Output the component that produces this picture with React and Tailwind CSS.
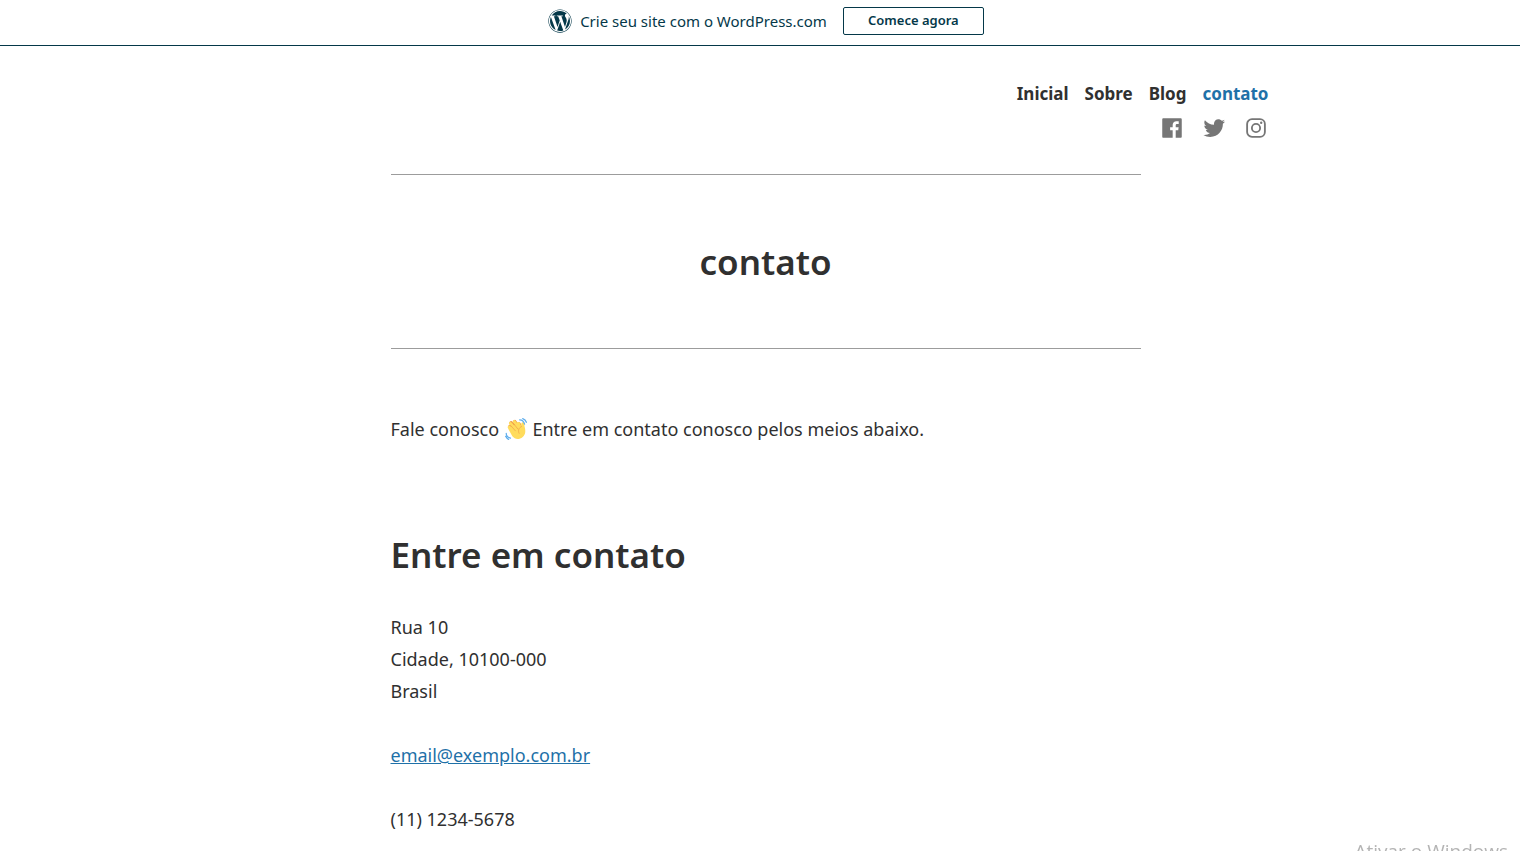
import React from 'react';
import { FaWordpress } from 'react-icons/fa';

const links = [
  { label: 'Inicial', href: '#inicial' },
  { label: 'Sobre', href: '#sobre' },
  { label: 'Blog', href: '#blog' },
  { label: 'contato', href: '#contato', active: true },
];

const socials = [
  {
    name: 'Facebook',
    path: 'M20.007,3H3.993C3.445,3,3,3.445,3,3.993v16.013c0,0.548,0.445,0.993,0.993,0.993h8.621v-6.971h-2.346v-2.717h2.346V9.31c0-2.325,1.42-3.591,3.494-3.591c0.993,0,1.847,0.074,2.096,0.107v2.43l-1.438,0.001c-1.128,0-1.346,0.536-1.346,1.323v1.734h2.69l-0.35,2.717h-2.34V21h4.587C20.555,21,21,20.555,21,20.007V3.993C21,3.445,20.555,3,20.007,3z',
  },
  {
    name: 'Twitter',
    path: 'M22.23,5.924c-0.736,0.326-1.527,0.547-2.357,0.646c0.847-0.508,1.498-1.312,1.804-2.27c-0.793,0.47-1.671,0.812-2.606,0.996C18.324,4.498,17.257,4,16.077,4c-2.266,0-4.103,1.837-4.103,4.103c0,0.322,0.036,0.635,0.106,0.935C8.67,8.867,5.647,7.234,3.623,4.751C3.27,5.357,3.067,6.062,3.067,6.814c0,1.424,0.724,2.679,1.825,3.415c-0.673-0.021-1.305-0.206-1.859-0.513c0,0.017,0,0.034,0,0.052c0,1.988,1.414,3.647,3.292,4.023c-0.344,0.094-0.707,0.144-1.081,0.144c-0.264,0-0.521-0.026-0.772-0.074c0.522,1.63,2.038,2.816,3.833,2.85c-1.404,1.1-3.174,1.756-5.096,1.756c-0.331,0-0.658-0.019-0.979-0.057c1.816,1.164,3.973,1.843,6.29,1.843c7.547,0,11.675-6.252,11.675-11.675c0-0.178-0.004-0.355-0.012-0.531C20.985,7.47,21.68,6.747,22.23,5.924z',
  },
];

function WavingHand() {
  return (
    <svg viewBox="0 0 36 36" role="img" aria-label="mão acenando" className="mx-px inline-block size-[22px] align-[-4px]">
      <g fill="none" stroke="#EF9645" strokeWidth="5.6" strokeLinecap="round">
        <path d="M8 14l10 11M10 8l12 14M16 6l10 14M23 10l6 12" />
      </g>
      <g fill="none" stroke="#FFDC5D" strokeWidth="5" strokeLinecap="round">
        <path d="M7 15l10 11M9 9l12 14M15 6l11 15M22 9l5 12" />
      </g>
      <path
        fill="#FFDC5D"
        d="M5 17L21 9l6 5c-1-5 0-7 2-7s3 3 3 7c2 7 2 13-3 17-6 5-13 4-17-1z"
      />
      <path fill="none" stroke="#EF9645" strokeWidth="1" strokeLinecap="round" d="M9 12l8 9M14 9l7 9M27 14c-5 2-6 7-4 11" />
      <g fill="none" stroke="#5DADEC" strokeWidth="2" strokeLinecap="round">
        <path d="M24 3c4 0 7 3 8 7M29 1c3 1 5 3 6 6M2 25c0 4 3 7 7 8M1 30c1 2 2 4 5 5" />
      </g>
    </svg>
  );
}

function Banner() {
  return (
    <div className="flex h-[46px] items-center justify-center border-b border-[#043849] pb-[3px] pl-3 text-[#043849]">
      <FaWordpress className="mr-2 size-6" />
      <span className="mr-4 text-[15px]">Crie seu site com o WordPress.com</span>
      <button className="h-7 w-[141px] rounded-xs border border-[#043849] text-[13px] font-semibold">
        Comece agora
      </button>
    </div>
  );
}

function Header() {
  return (
    <header className="mx-auto flex max-w-[1006px] flex-col items-end pt-8">
      <nav className="flex gap-4 text-[17px] leading-8 font-bold">
        {links.map((link) => (
          <a key={link.label} href={link.href} className={link.active ? 'text-[#1f71a8]' : 'text-[#303030]'}>
            {link.label}
          </a>
        ))}
      </nav>
      <div className="mt-[5px] flex gap-4 text-[#767676]">
        {socials.map((s) => (
          <a key={s.name} href={`#${s.name}`} aria-label={s.name}>
            <svg viewBox="0 0 24 24" fill="currentColor" className="size-[26px]">
              <path d={s.path} />
            </svg>
          </a>
        ))}
        <a href="#Instagram" aria-label="Instagram">
          <svg viewBox="0 0 24 24" className="size-[26px]" fill="none" stroke="currentColor">
            <rect x="3.8" y="3.8" width="16.4" height="16.4" rx="4.5" strokeWidth="1.7" />
            <circle cx="12" cy="12" r="3.8" strokeWidth="1.7" />
            <circle cx="16.8" cy="7.2" r="1.1" fill="currentColor" stroke="none" />
          </svg>
        </a>
      </div>
    </header>
  );
}

export default function App() {
  return (
    <div className="min-h-screen bg-white font-['Noto_Sans',sans-serif] text-[#303030]">
      <Banner />

      <div className="pl-[11px]">
        <Header />

        <main className="mx-auto mt-[33px] max-w-[750px] text-lg leading-8">
          <div className="border-y border-[#9c9c9c] py-16">
            <h1 className="text-center text-[35px] leading-[45px] font-semibold">contato</h1>
          </div>

          <p className="mt-16">
            Fale conosco <WavingHand /> Entre em contato conosco pelos meios abaixo.
          </p>

          <h2 className="mt-20 text-[35px] leading-[60px] font-semibold">Entre em contato</h2>
          <address className="mt-[26px] not-italic">
            Rua 10
            <br />
            Cidade, 10100-000
            <br />
            Brasil
          </address>
          <p className="mt-8">
            <a href="mailto:email@exemplo.com.br" className="text-[#1f71a8] underline">
              email@exemplo.com.br
            </a>
          </p>
          <p className="mt-8">(11) 1234-5678</p>
        </main>
      </div>

      <div className="pointer-events-none fixed right-3 -bottom-4 font-['Open_Sans',sans-serif] text-[19px] leading-8 text-[#b4b4b4]">
        Ativar o Windows
      </div>
    </div>
  );
}
